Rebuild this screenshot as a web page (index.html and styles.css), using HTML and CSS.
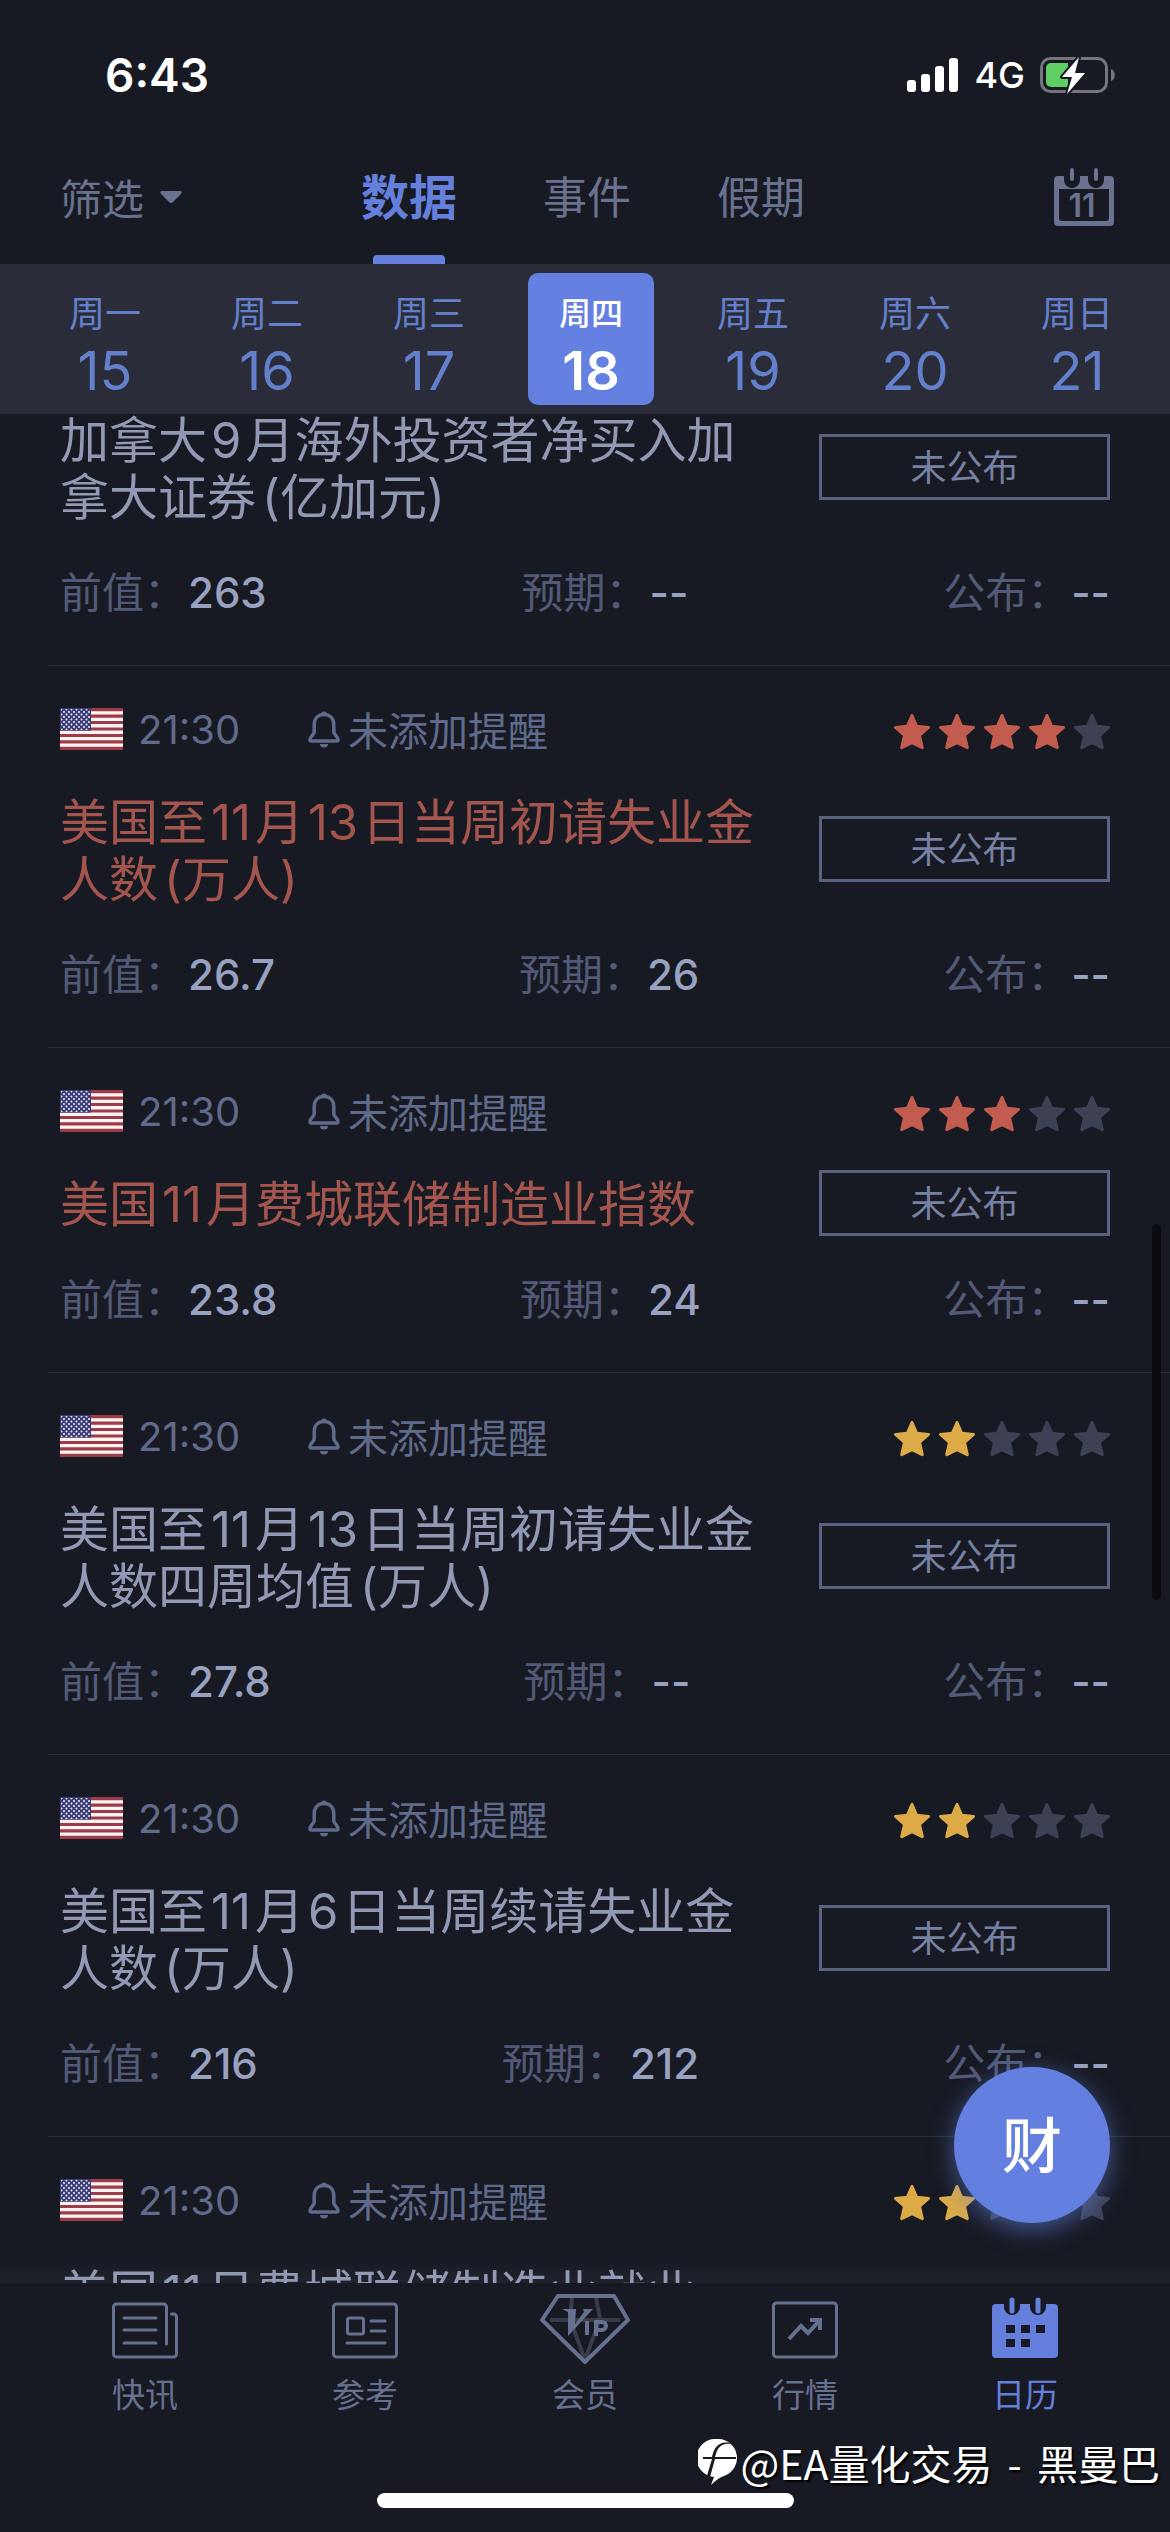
FILE: index.html
```html
<!DOCTYPE html>
<html lang="zh-CN">
<head>
<meta charset="utf-8">
<meta name="viewport" content="width=device-width, initial-scale=1">
<title>财经日历</title>
<link rel="stylesheet" href="styles.css">
</head>
<body>
<svg class="defs" aria-hidden="true">
  <symbol id="star" viewBox="0 0 36 36"><path d="M18 1.500l4.600 10.700 11.900 1.200-9 7.900 2.800 12.400L18 28.600l-10.300 5.100 2.800-12.400-9-7.900 11.900-1.200z" stroke-linejoin="round" stroke-width="3"/></symbol>
  <symbol id="bell" viewBox="0 0 32 38"><path d="M16 4.500c-6.200 0-9.800 4.300-9.800 10.200v7.300c0 2.400-4.200 4.600-4.200 7.500 0 .8.500 1.500 1.500 1.500h25c1 0 1.500-.7 1.500-1.500 0-2.900-4.200-5.100-4.200-7.500v-7.300c0-5.900-3.600-10.200-9.800-10.200z" fill="none" stroke="currentColor" stroke-width="3.500"/><path d="M14 4.500a2 2 0 0 1 4 0z" fill="currentColor" stroke="currentColor" stroke-width="2"/><path d="M12 34h8a4 3.500 0 0 1-8 0z" fill="currentColor"/></symbol>
  <pattern id="dots" width="5" height="5" patternUnits="userSpaceOnUse"><circle cx="1.500" cy="1.500" r=".9" fill="#fff"/><circle cx="4" cy="4" r=".9" fill="#fff"/></pattern>
  <symbol id="flag" viewBox="0 0 63 42"><path fill="#fdf3f3" d="M0 0h63v42H0z"/><path stroke="#9c3c48" stroke-width="3.230" d="M0 1.600h63M0 8.100h63M0 14.500h63M0 21h63M0 27.500h63M0 33.900h63M0 40.400h63"/><path fill="#3a3d78" d="M0 0h31v22.600H0z"/><path fill="url(#dots)" d="M1 1h29v21H1z"/></symbol>
</svg>
<div class="app">
  <div class="status">
    <time class="clock">6:43</time>
    <div class="signals">
      <svg width="52" height="35" viewBox="0 0 52 35" fill="#fff"><rect y="22" width="9" height="12" rx="3"/><rect x="14" y="16" width="9" height="18" rx="3"/><rect x="28" y="8" width="9" height="26" rx="3"/><rect x="42" width="9" height="34" rx="3"/></svg>
      <span class="network">4G</span>
      <svg width="76" height="40" viewBox="0 0 76 40"><rect x="1.500" y="3.500" width="65" height="33" rx="9" fill="none" stroke="#74767c" stroke-width="3"/><path d="M71 14c5 1 5 11 0 12z" fill="#74767c"/><path d="M11 8h17v24H11a5 5 0 0 1-5-5V13a5 5 0 0 1 5-5z" fill="#5fce64"/><path d="M39 2L22 22h10l-5 17 18-21H35z" fill="#fff" stroke="#171a22" stroke-width="4" paint-order="stroke" stroke-linejoin="round"/></svg>
    </div>
  </div>
  <header class="header">
    <button class="filter" type="button">筛选<svg width="22" height="12" viewBox="0 0 22 12"><path d="M2 0h18q3 0 1 3l-8 8q-2 2-4 0L1 3q-2-3 1-3z" fill="currentColor"/></svg></button>
    <nav class="tabs">
      <a class="tab tab-on" href="#data">数据</a>
      <a class="tab" href="#events">事件</a>
      <a class="tab" href="#holidays">假期</a>
    </nav>
    <button class="today" type="button" aria-label="今天">
      <svg width="60" height="58" viewBox="0 0 60 58"><path fill="currentColor" fill-rule="evenodd" d="M4 8h6v4a8 8 0 0 0 16 0V8h8v4a8 8 0 0 0 16 0V8h6a4 4 0 0 1 4 4v42a4 4 0 0 1-4 4H4a4 4 0 0 1-4-4V12a4 4 0 0 1 4-4zm1 13v29a3 3 0 0 0 3 3h44a3 3 0 0 0 3-3V21z"/><path d="M18 2v9M42 2v9" stroke="currentColor" stroke-width="4" stroke-linecap="round"/></svg>
      <span class="today-num">11</span>
    </button>
  </header>
  <div class="week">
    <button class="day" type="button"><span>周一</span><b>15</b></button>
    <button class="day" type="button"><span>周二</span><b>16</b></button>
    <button class="day" type="button"><span>周三</span><b>17</b></button>
    <button class="day day-on" type="button"><span>周四</span><b>18</b></button>
    <button class="day" type="button"><span>周五</span><b>19</b></button>
    <button class="day" type="button"><span>周六</span><b>20</b></button>
    <button class="day" type="button"><span>周日</span><b>21</b></button>
  </div>
  <main class="list">
    <article class="item item-first">
      <div class="main"><h2 class="title">加拿大<span class="num">9</span>月海外投资者净买入加拿大证券<span class="unit">(亿加元)</span></h2><button class="state" type="button">未公布</button></div>
      <dl class="values"><div><dt>前值：</dt><dd>263</dd></div><div><dt>预期：</dt><dd>--</dd></div><div><dt>公布：</dt><dd>--</dd></div></dl>
    </article>
    <article class="item hot">
      <div class="meta"><svg class="flag"><use href="#flag"/></svg><time>21:30</time><button class="remind" type="button"><svg class="bell"><use href="#bell"/></svg>未添加提醒</button><div class="stars"><svg class="on"><use href="#star"/></svg><svg class="on"><use href="#star"/></svg><svg class="on"><use href="#star"/></svg><svg class="on"><use href="#star"/></svg><svg><use href="#star"/></svg></div></div>
      <div class="main"><h2 class="title">美国至<span class="num">11</span>月<span class="num">13</span>日当周初请失业金人数<span class="unit">(万人)</span></h2><button class="state" type="button">未公布</button></div>
      <dl class="values"><div><dt>前值：</dt><dd>26.7</dd></div><div><dt>预期：</dt><dd>26</dd></div><div><dt>公布：</dt><dd>--</dd></div></dl>
    </article>
    <article class="item hot">
      <div class="meta"><svg class="flag"><use href="#flag"/></svg><time>21:30</time><button class="remind" type="button"><svg class="bell"><use href="#bell"/></svg>未添加提醒</button><div class="stars"><svg class="on"><use href="#star"/></svg><svg class="on"><use href="#star"/></svg><svg class="on"><use href="#star"/></svg><svg><use href="#star"/></svg><svg><use href="#star"/></svg></div></div>
      <div class="main"><h2 class="title">美国<span class="num">11</span>月费城联储制造业指数</h2><button class="state" type="button">未公布</button></div>
      <dl class="values"><div><dt>前值：</dt><dd>23.8</dd></div><div><dt>预期：</dt><dd>24</dd></div><div><dt>公布：</dt><dd>--</dd></div></dl>
    </article>
    <article class="item">
      <div class="meta"><svg class="flag"><use href="#flag"/></svg><time>21:30</time><button class="remind" type="button"><svg class="bell"><use href="#bell"/></svg>未添加提醒</button><div class="stars"><svg class="on"><use href="#star"/></svg><svg class="on"><use href="#star"/></svg><svg><use href="#star"/></svg><svg><use href="#star"/></svg><svg><use href="#star"/></svg></div></div>
      <div class="main"><h2 class="title">美国至<span class="num">11</span>月<span class="num">13</span>日当周初请失业金人数四周均值<span class="unit">(万人)</span></h2><button class="state" type="button">未公布</button></div>
      <dl class="values"><div><dt>前值：</dt><dd>27.8</dd></div><div><dt>预期：</dt><dd>--</dd></div><div><dt>公布：</dt><dd>--</dd></div></dl>
    </article>
    <article class="item">
      <div class="meta"><svg class="flag"><use href="#flag"/></svg><time>21:30</time><button class="remind" type="button"><svg class="bell"><use href="#bell"/></svg>未添加提醒</button><div class="stars"><svg class="on"><use href="#star"/></svg><svg class="on"><use href="#star"/></svg><svg><use href="#star"/></svg><svg><use href="#star"/></svg><svg><use href="#star"/></svg></div></div>
      <div class="main"><h2 class="title">美国至<span class="num">11</span>月<span class="num">6</span>日当周续请失业金人数<span class="unit">(万人)</span></h2><button class="state" type="button">未公布</button></div>
      <dl class="values"><div><dt>前值：</dt><dd>216</dd></div><div><dt>预期：</dt><dd>212</dd></div><div><dt>公布：</dt><dd>--</dd></div></dl>
    </article>
    <article class="item">
      <div class="meta"><svg class="flag"><use href="#flag"/></svg><time>21:30</time><button class="remind" type="button"><svg class="bell"><use href="#bell"/></svg>未添加提醒</button><div class="stars"><svg class="on"><use href="#star"/></svg><svg class="on"><use href="#star"/></svg><svg><use href="#star"/></svg><svg><use href="#star"/></svg><svg><use href="#star"/></svg></div></div>
      <div class="main"><h2 class="title">美国<span class="num">11</span>月费城联储制造业就业</h2></div>
    </article>
  </main>
  <nav class="tabbar">
    <a href="#news"><svg width="66" height="70" viewBox="0 0 66 70" fill="none" stroke="currentColor" stroke-width="3" stroke-linecap="round"><path d="M54.500 50V13a3 3 0 0 0-3-3h-47a3 3 0 0 0-3 3v47a3 3 0 0 0 3 3h57a3 3 0 0 0 3-3V23a3 3 0 0 0-3-3h-2M12 24h32M12 36h32M12 49h32"/></svg><span>快讯</span></a>
    <a href="#reference"><svg width="66" height="70" viewBox="0 0 66 70" fill="none" stroke="currentColor" stroke-width="3" stroke-linecap="round"><rect x="1.500" y="10" width="63" height="53" rx="3"/><rect x="15.500" y="24" width="16" height="16" rx="2"/><path d="M39 27h14M39 37h14M15 49h38"/></svg><span>参考</span></a>
    <a href="#vip"><svg width="90" height="70" viewBox="0 0 90 70"><g fill="none" stroke="#3a3c49" stroke-width="4"><path d="M10 26h70M32 4l-2 21 15 41 15-41-4-21"/></g><path d="M18 2h56l14 24-43 42L2 26z" fill="none" stroke="currentColor" stroke-width="4"/><path d="M22 15h14l-1 15 9-12-1-3h10L28 42V18z" fill="currentColor"/><path d="M47 27v14M56 42V28h6a4 4 0 0 1 0 8h-6" fill="none" stroke="currentColor" stroke-width="4"/></svg><span>会员</span></a>
    <a href="#quotes"><svg width="66" height="70" viewBox="0 0 66 70" fill="none" stroke="currentColor" stroke-width="3"><rect x="1.500" y="9" width="63" height="54" rx="3"/><path d="M17 45l12-13 7 7 12-13M38 26h10v10" stroke-width="4"/></svg><span>行情</span></a>
    <a class="current" href="#calendar"><svg width="66" height="70" viewBox="0 0 66 70" fill="currentColor"><path fill-rule="evenodd" d="M4 10h8v3a8 8 0 0 0 16 0v-3h10v3a8 8 0 0 0 16 0v-3h8a4 4 0 0 1 4 4v46a4 4 0 0 1-4 4H4a4 4 0 0 1-4-4V14a4 4 0 0 1 4-4zm10 21v8h9v-8zm15 0v8h9v-8zm15 0v8h9v-8zM14 45v8h9v-8zm15 0v8h9v-8z"/><path d="M20 6v11M46 6v11" stroke="currentColor" stroke-width="5" stroke-linecap="round"/></svg><span>日历</span></a>
  </nav>
  <div class="home"></div>
  <div class="thumb"></div>
  <button class="fab" type="button">财</button>
  <div class="credit"><svg width="40" height="46" viewBox="0 0 40 46"><path fill="#fff" d="M19 0a19 19 0 0 1 7 37q-6 2-13 9l3-8A19 19 0 0 1 19 0z"/><path fill="#171a22" d="M35 5C20 3 19 12 17 18h21v2H17l-5 18-4 2 6-20H5v-2h9C16 8 22 0 35 5z"/></svg><span>@EA量化交易<span class="dash"> - </span>黑曼巴</span></div>
</div>
</body>
</html>
```
FILE: styles.css
```css
* { box-sizing: border-box; }
body {
  margin: 0;
  background: #171a22;
  color: #9299b4;
  font-family: Inter, "Noto Sans CJK SC", sans-serif;
}
button {
  padding: 0;
  border: 0;
  background: none;
  color: inherit;
  font: inherit;
}
a { color: inherit; text-decoration: none; }
svg { display: block; flex: none; }
.defs { position: absolute; width: 0; height: 0; }
.app {
  position: relative;
  display: flex;
  flex-direction: column;
  height: 100vh;
  overflow: hidden;
}

.status {
  display: flex;
  align-items: center;
  justify-content: space-between;
  height: 150px;
  padding: 0 54px 0 105px;
  color: #fff;
}
.clock { font-size: 46px; font-weight: 600; }
.signals { display: flex; align-items: center; gap: 15px; }
.network { font-size: 36px; font-weight: 500; }

.header {
  display: grid;
  grid-template-columns: 1fr auto 1fr;
  height: 114px;
  padding: 0 56px 0 60px;
  color: #69728f;
}
.filter {
  display: flex;
  align-items: center;
  justify-self: start;
  gap: 16px;
  height: 93px;
  font-size: 42px;
}
.tabs { display: flex; gap: 86px; padding-right: 8px; }
.tab {
  display: flex;
  flex-direction: column;
  align-items: center;
  justify-content: space-between;
  font-size: 44px;
  line-height: 96px;
}
.tab-on { color: #6480dc; font-size: 48px; font-weight: 700; }
.tab-on::after {
  width: 72px;
  height: 9px;
  border-radius: 4px 4px 0 0;
  background: #6480dc;
  content: "";
}
.today {
  position: relative;
  align-self: start;
  justify-self: end;
  margin-top: 18px;
}
.today-num {
  position: absolute;
  inset: 20px 4px 0 0;
  font-size: 32px;
  font-weight: 600;
  line-height: 36px;
}

.week {
  display: flex;
  flex: none;
  height: 150px;
  padding: 9px 12px 9px 24px;
  background: #2a2d39;
  color: #6480cc;
}
.day {
  display: flex;
  flex: 1;
  flex-direction: column;
  align-items: center;
  margin: 0 18px;
  padding-top: 16px;
  border-radius: 10px;
}
.day span { font-size: 36px; line-height: 50px; }
.day b { font-size: 54px; font-weight: 400; line-height: 64px; }
.day-on { background: #6480e0; color: #fff; }
.day-on span { font-size: 32px; font-weight: 500; }
.day-on b { font-weight: 600; }

.list {
  flex: 1;
  min-height: 0;
  overflow: hidden;
  background: linear-gradient(to top, #20232c, #171a22 24px);
}
.item {
  margin-left: 48px;
  padding: 42px 60px 48px 12px;
  border-bottom: 1px solid #2a2d36;
}
.item-first { margin-top: -2px; padding-top: 0; }
.meta {
  display: flex;
  align-items: center;
  height: 42px;
  margin-bottom: 44px;
  color: #606b8c;
  font-size: 40px;
}
.meta time { min-width: 170px; margin-left: 15px; }
.flag { width: 63px; height: 42px; }
.remind { display: flex; align-items: center; gap: 8px; }
.bell { width: 32px; height: 38px; }
.stars { display: flex; gap: 9px; margin: 6px 0 0 auto; }
.stars svg { width: 36px; height: 36px; fill: #3d4154; stroke: #3d4154; }
.stars .on { fill: #dcab48; stroke: #dcab48; }
.hot .stars .on { fill: #c15c4e; stroke: #c15c4e; }
.main { display: flex; align-items: center; justify-content: space-between; }
.title {
  width: 700px;
  margin: 0;
  font-size: 49px;
  font-weight: 400;
  line-height: 57px;
}
.title .num { margin: 0 4px; }
.title .unit { margin-left: 6px; }
.hot .title { color: #a4554e; }
.state {
  width: 291px;
  height: 66px;
  margin: -7px 0 -3px;
  padding-bottom: 4px;
  border: 3px solid #59637f;
  color: #7681a4;
  font-size: 36px;
}
.values {
  display: flex;
  justify-content: space-between;
  margin: 43px 0 0;
  font-size: 42px;
  line-height: 48px;
}
.values div { display: flex; }
.values dt { color: #525a77; }
.values dd { margin: 0 0 0 2px; color: #98a1c0; font-weight: 500; }

.tabbar {
  display: flex;
  flex: none;
  height: 210px;
  padding: 11px 35px 0;
  background: #171a22;
  color: #66708f;
}
.tabbar a {
  display: flex;
  flex: 1;
  flex-direction: column;
  align-items: center;
  gap: 7px;
  font-size: 33px;
  line-height: 48px;
}
.tabbar .current { color: #6480dc; }
.home {
  flex: none;
  align-self: center;
  width: 417px;
  height: 15px;
  margin-bottom: 24px;
  border-radius: 8px;
  background: #fff;
}
.thumb {
  position: absolute;
  top: 1224px;
  right: 9px;
  width: 9px;
  height: 376px;
  border-radius: 4px;
  background: #0a0c10;
}
.fab {
  position: absolute;
  right: 60px;
  bottom: 309px;
  width: 156px;
  height: 156px;
  padding-bottom: 8px;
  border-radius: 50%;
  background: #6380e0;
  box-shadow: 0 6px 24px rgba(99, 128, 224, .6);
  color: #fff;
  font-size: 60px;
  font-weight: 500;
}
.credit {
  position: absolute;
  right: 10px;
  bottom: 42px;
  display: flex;
  align-items: center;
  gap: 3px;
  color: #fff;
  font-family: "Noto Sans CJK SC", sans-serif;
  font-size: 41px;
  line-height: 56px;
  text-shadow: 2px 2px 2px #000;
  white-space: pre;
}
.dash { margin: 0 6px; }
```
